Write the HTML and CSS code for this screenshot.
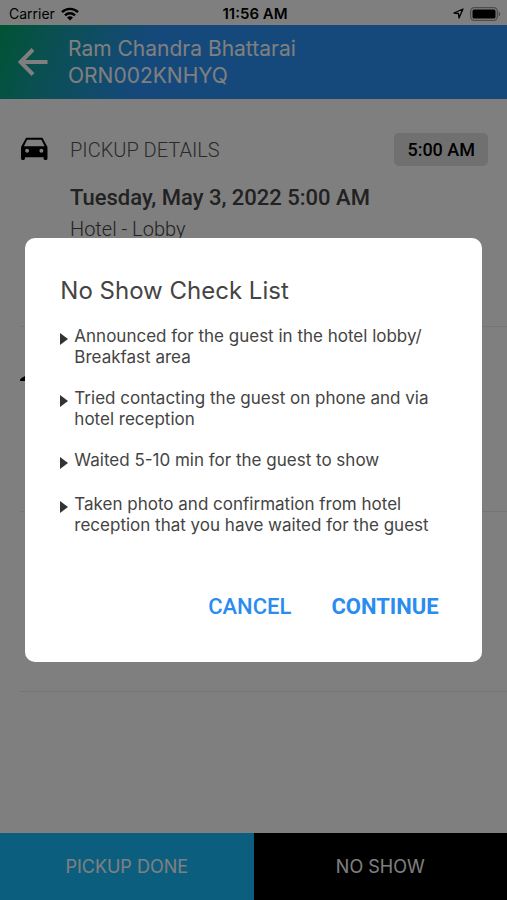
FILE: index.html
```html
<!DOCTYPE html>
<html lang="en">
<head>
<meta charset="utf-8">
<meta name="viewport" content="width=device-width, initial-scale=1">
<title>Pickup details</title>
<link rel="stylesheet" href="styles.css">
</head>
<body>
<div class="screen">
  <div class="status">
    <div class="status-left">
      <span>Carrier</span>
      <svg width="18" height="14" viewBox="0 0 18 14" fill="none" stroke="#000" stroke-width="2.4"><path d="M1 5.2C5.4.7 12.6.7 17 5.2M4 8.3c2.8-2.8 7.2-2.8 10 0"/><path d="M9 13.6 6 10.500c1.700-1.600 4.300-1.600 6 0z" fill="#000" stroke="none"/></svg>
    </div>
    <span class="clock">11:56 AM</span>
    <div class="status-right">
      <svg width="11" height="11" viewBox="0 0 11 11" fill="none" stroke="#000" stroke-width="1.300" stroke-linejoin="round"><path d="M10 1 1 5l4.500.500.500 4.500z"/></svg>
      <svg width="31" height="14" viewBox="0 0 31 14"><rect x=".7" y=".7" width="26.600" height="12.600" rx="3.500" fill="none" stroke="#000" stroke-opacity=".4" stroke-width="1.300"/><rect x="2.500" y="2.500" width="23" height="9" rx="1.500"/><path d="M28.700 4.500c2 .8 2 4.200 0 5z" fill-opacity=".4"/></svg>
    </div>
  </div>
  <header class="header">
    <button class="back" aria-label="Back">
      <svg width="30" height="28" viewBox="0 0 30 28" fill="none" stroke="#fff" stroke-width="4"><path d="M29.500 14H3M15 1.500 2.500 14 15 26.500"/></svg>
    </button>
    <h1 class="guest">Ram Chandra Bhattarai<br>ORN002KNHYQ</h1>
  </header>
  <main class="details">
    <section class="row row-pickup">
      <svg class="icon" width="28" height="28" viewBox="1 1.8 21.6 21.6"><path d="M18.920 5.010C18.720 4.420 18.160 4 17.500 4h-11c-.66 0-1.210.42-1.420 1.010L1.800 11v9c0 .55.45 1 1 1h1c.55 0 1-.45 1-1v-1h14.400v1c0 .55.45 1 1 1h1c.55 0 1-.45 1-1v-9l-3.280-5.990zM6.500 15.500c-.83 0-1.500-.67-1.500-1.500s.67-1.500 1.500-1.500S8 13.170 8 14s-.67 1.500-1.500 1.500zm11 0c-.83 0-1.500-.67-1.500-1.500s.67-1.500 1.500-1.500 1.500.67 1.500 1.500-.67 1.500-1.500 1.500zM4 10.500 6.500 5.500h11L20 10.500H4z"/></svg>
      <div class="row-body">
        <div class="row-head">
          <h2 class="label">PICKUP DETAILS</h2>
          <span class="time">5:00 AM</span>
        </div>
        <p class="date">Tuesday, May 3, 2022 5:00 AM</p>
        <p class="place">Hotel - Lobby</p>
      </div>
    </section>
    <section class="row row-guest">
      <svg class="icon" width="28" height="28" viewBox="0 0 28 28"><path d="M0 18c0-3 3-4 8-6h12c5 2 8 3 8 6z"/></svg>
    </section>
    <section class="row row-notes"></section>
  </main>
  <footer class="footer">
    <button class="action done">PICKUP DONE</button>
    <button class="action no-show">NO SHOW</button>
  </footer>
</div>
<div class="backdrop">
  <div class="modal" role="dialog" aria-modal="true" aria-labelledby="modal-title">
    <h2 class="modal-title" id="modal-title">No Show Check List</h2>
    <ul class="checks">
      <li>Announced for the guest in the hotel lobby/<wbr> Breakfast area</li>
      <li>Tried contacting the guest on phone and via hotel reception</li>
      <li>Waited 5-10 min for the guest to show</li>
      <li>Taken photo and confirmation from hotel reception that you have waited for the guest</li>
    </ul>
    <div class="modal-actions">
      <button class="link">CANCEL</button>
      <button class="link strong">CONTINUE</button>
    </div>
  </div>
</div>
</body>
</html>
```
FILE: styles.css
```css
* { box-sizing: border-box; margin: 0; padding: 0; }
body { background: #fff; font-family: Roboto, "Liberation Sans", sans-serif; color: #000; }
button { border: 0; background: none; font: inherit; cursor: pointer; }
svg { display: block; flex: none; }

.screen { display: flex; flex-direction: column; min-height: 100vh; }

.status {
  display: grid; grid-template-columns: 1fr auto 1fr; align-items: center;
  height: 25px; padding: 2px 6px 0 9px;
  font: 14px Inter, "Liberation Sans", sans-serif;
}
.status-left, .status-right { display: flex; align-items: center; gap: 6px; }
.status-right { justify-content: flex-end; }
.clock { font-size: 15px; font-weight: 600; }

.header {
  display: flex; align-items: center; gap: 20px;
  height: 74px; padding: 0 18px;
  background: linear-gradient(110deg, #00a868 0%, #14a0a0 10%, #2b92f8 30%);
}
.guest { font: 400 21px/27px Inter, sans-serif; color: #fff; }

.details { flex: 1; padding-left: 20px; }
.row { display: flex; gap: 22px; border-bottom: 1px solid #eaeaea; }
.row-pickup { min-height: 228px; padding: 34px 19px 0 0; }
.row-guest { min-height: 185px; padding-top: 36px; }
.row-notes { min-height: 180px; }
.row-pickup .icon { margin-top: 2px; }
.row-body { flex: 1; }
.row-head { display: flex; align-items: center; justify-content: space-between; height: 33px; }
.label { font-size: 20px; font-weight: 300; color: #555; }
.time {
  padding: 0 13px; border-radius: 5px; background: #e0e0e0;
  font-size: 18px; line-height: 33px; font-weight: 500;
}
.date { margin-top: 16px; font-size: 22px; line-height: 32px; font-weight: 500; color: #444; }
.place { font-size: 20px; line-height: 30px; font-weight: 300; color: #444; }

.footer { display: flex; }
.action { flex: 1; height: 67px; font: 18px Inter, sans-serif; color: #fff; }
.done { background: #18bcff; }
.no-show { background: #000; }

.backdrop {
  position: fixed; inset: 0; display: flex; align-items: center; justify-content: center;
  background: rgba(0, 0, 0, .5);
}
.modal { width: 90%; padding: 36px 35px 33px; border-radius: 10px; background: #fff; color: #444; }
.modal-title { font: 400 24px/34px Inter, sans-serif; }
.checks { margin-top: 18px; list-style: none; font: 17px/21px Inter, sans-serif; }
.checks li { position: relative; min-height: 24px; padding-left: 14px; margin-bottom: 20px; }
.checks li::before {
  content: ""; position: absolute; left: 0; top: 7px;
  border: solid transparent; border-width: 6px 0 6px 8px; border-left-color: #333;
}
.modal-actions { display: flex; justify-content: flex-end; gap: 40px; padding: 29px 8px 0 0; }
.link { color: #2b8cf0; font-size: 22px; line-height: 44px; font-weight: 500; }
.strong { font-weight: 700; }
```
